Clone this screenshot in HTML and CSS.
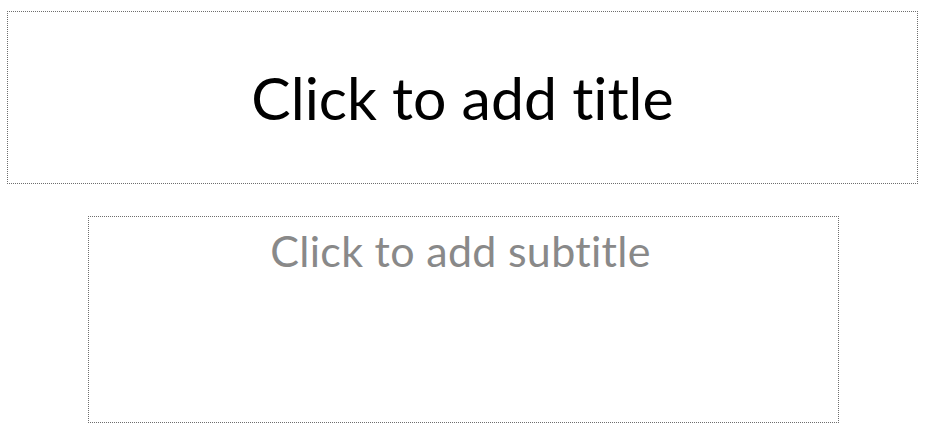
FILE: index.html
```html
<!DOCTYPE html>
<html lang="en">
<head>
    <meta charset="UTF-8">
    <title>Slide</title>
    <link rel="stylesheet" href="styles.css">
</head>
<body>
    <div class="slide">
        <div class="placeholder title-box">
            <span class="title-text">Click to add title</span>
        </div>
        <div class="placeholder subtitle-box">
            <span class="subtitle-text">Click to add subtitle</span>
        </div>
    </div>
</body>
</html>
```

FILE: styles.css
```css
* {
    margin: 0;
    padding: 0;
    box-sizing: border-box;
}

body {
    background: #FFFFFF;
    font-family: 'Lato', 'Open Sans', sans-serif;
    font-variant-ligatures: none;
}

.slide {
    display: flex;
    flex-direction: column;
    padding: 11px 0 0 7px;
}

.placeholder {
    border: 1px dotted #6E6E6E;
}

.title-box {
    width: 911px;
    height: 173px;
    display: flex;
    align-items: center;
    justify-content: center;
}

.title-text {
    font-size: 59px;
    line-height: 1;
    color: #000000;
}

.subtitle-box {
    width: 751px;
    height: 207px;
    margin: 32px 0 0 81px;
    padding: 12px 6px 0 0;
    text-align: center;
}

.subtitle-text {
    font-size: 43px;
    line-height: 1;
    letter-spacing: 0.3px;
    color: #898989;
}
```
